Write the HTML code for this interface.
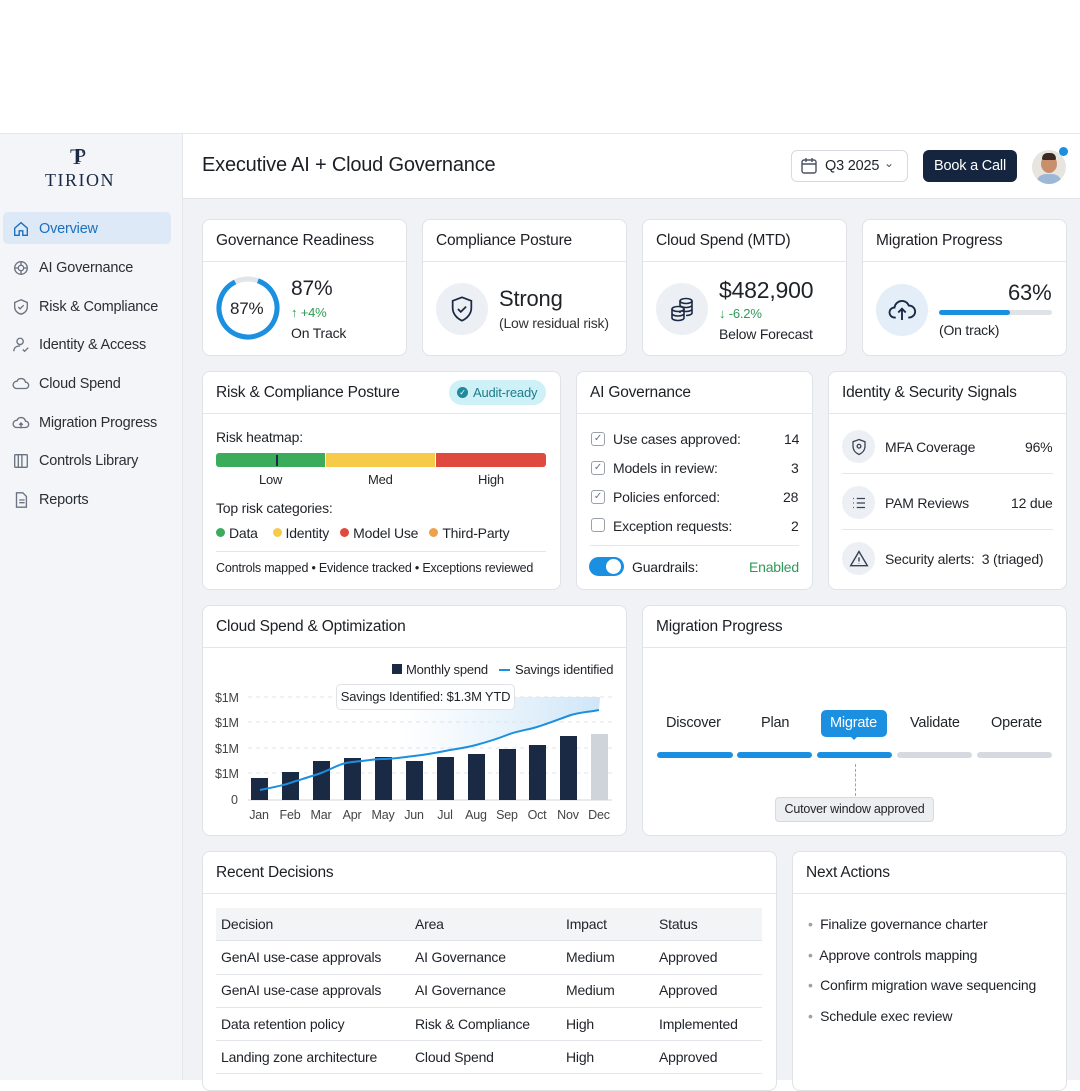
<!DOCTYPE html>
<html><head><meta charset="utf-8"><style>
*{box-sizing:border-box;margin:0;padding:0}
body{width:1080px;height:1080px;overflow:hidden;background:#fff;font-family:"Liberation Sans",sans-serif;color:#1f2328;position:relative;font-size:14px;letter-spacing:-0.2px}
.a{position:absolute}
.side{left:0;top:133px;width:183px;height:947px;background:#f3f5f8;border-right:1px solid #e3e6eb;border-top:1px solid #e6e8ec}
.main{left:183px;top:198px;width:897px;height:882px;background:#f0f2f5;border-top:1px solid #e2e5ea}
.hdr{left:183px;top:133px;width:897px;height:65px;background:#fff;border-top:1px solid #e6e8ec}
.card{position:absolute;background:#fff;border:1px solid #dfe2e7;border-radius:8px;overflow:hidden}
.ch{height:42px;border-bottom:1px solid #e3e6ea;padding:12px 13px;font-size:15.5px;color:#1c1f24}
.nav{position:absolute;left:12px;font-size:14.5px;color:#2a2e35;display:flex;align-items:center;gap:9px}
.nav svg{width:18px;height:18px;fill:none;stroke:#6b7280;stroke-width:1.5}
.t{position:absolute;white-space:nowrap}
.ic{position:absolute;width:52px;height:52px;border-radius:50%;background:#eceff4;display:flex;align-items:center;justify-content:center}
.cb{position:absolute;width:14px;height:14px;border:1.3px solid #9aa1ab;border-radius:3px}
.dot{display:inline-block;width:9px;height:9px;border-radius:50%;margin-right:4px;vertical-align:1px}
</style></head><body>
<div class="a side"></div>
<div class="a hdr"></div>
<div class="a main"></div>

<!-- logo -->
<div class="t" style="left:70px;top:144px;font-family:'Liberation Serif',serif;font-size:22px;color:#1b2a44">T</div>
<div class="t" style="left:75px;top:145px;font-family:'Liberation Serif',serif;font-size:20px;color:#1b2a44">P</div>
<div class="t" style="left:45px;top:170px;font-family:'Liberation Serif',serif;font-size:18px;letter-spacing:1.5px;color:#1b2a44">TIRION</div>

<div class="a" style="left:3px;top:212px;width:168px;height:32px;background:#dde9f6;border-radius:5px"></div>
<div class="nav" style="top:220px;color:#1a6fc0"><svg viewBox="0 0 20 20" style="stroke:#1a6fc0"><path d="M3 9l7-6 7 6v8h-5v-5H8v5H3z"/></svg>Overview</div>
<div class="nav" style="top:259px"><svg viewBox="0 0 20 20"><circle cx="10" cy="10" r="7"/><circle cx="10" cy="10" r="3"/><path d="M10 3v4M10 13v4M3 10h4M13 10h4"/></svg>AI Governance</div>
<div class="nav" style="top:298px"><svg viewBox="0 0 20 20"><path d="M10 2l7 3v5c0 4-3 7-7 8-4-1-7-4-7-8V5z"/><path d="M7 10l2 2 4-4"/></svg>Risk &amp; Compliance</div>
<div class="nav" style="top:336px"><svg viewBox="0 0 20 20"><circle cx="9" cy="6" r="3.5"/><path d="M2 17c0-4 3-6 7-6M12 15l2 2 4-4"/></svg>Identity &amp; Access</div>
<div class="nav" style="top:375px"><svg viewBox="0 0 20 20"><path d="M5 15h10a3.5 3.5 0 000-7 5 5 0 00-9.5-1A4 4 0 005 15z"/></svg>Cloud Spend</div>
<div class="nav" style="top:414px"><svg viewBox="0 0 20 20"><path d="M5 15h10a3.5 3.5 0 000-7 5 5 0 00-9.5-1A4 4 0 005 15zM10 16v-6M8 12l2-2 2 2"/></svg>Migration Progress</div>
<div class="nav" style="top:452px"><svg viewBox="0 0 20 20"><rect x="3" y="3" width="14" height="14" rx="1"/><path d="M7 3v14M11 3v14"/></svg>Controls Library</div>
<div class="nav" style="top:491px"><svg viewBox="0 0 20 20"><path d="M5 2h7l4 4v12H5zM8 10h6M8 13h6"/></svg>Reports</div>

<!-- header -->
<div class="t" style="left:202px;top:154px;font-size:20px;color:#1c1f24">Executive AI + Cloud Governance</div>
<div class="a" style="left:791px;top:150px;width:117px;height:32px;border:1px solid #d6dae0;border-radius:6px"></div>
<svg class="a" style="left:800px;top:157px" width="18" height="18" viewBox="0 0 18 18" fill="none" stroke="#4b5160" stroke-width="1.4"><rect x="2" y="3" width="14" height="13" rx="2"/><path d="M2 7h14M6 1v4M12 1v4"/></svg>
<div class="t" style="left:825px;top:158px;font-size:14.5px">Q3 2025</div>
<div class="t" style="left:884px;top:156px;font-size:12px;color:#555">⌄</div>
<div class="a" style="left:923px;top:150px;width:94px;height:32px;background:#15253f;border-radius:6px;color:#fff;font-size:14.5px;text-align:center;line-height:32px">Book a Call</div>
<div class="a" style="left:1032px;top:150px;width:34px;height:34px;border-radius:50%;background:#e8e4e0;overflow:hidden"><div class="a" style="left:9px;top:5px;width:16px;height:18px;border-radius:50%;background:#c98f6c"></div><div class="a" style="left:10px;top:3px;width:14px;height:7px;border-radius:6px 6px 2px 2px;background:#3a2a22"></div><div class="a" style="left:4px;top:24px;width:26px;height:14px;border-radius:10px 10px 0 0;background:#9cb8d6"></div></div>
<div class="a" style="left:1059px;top:147px;width:9px;height:9px;border-radius:50%;background:#1a8fe0"></div>

<!-- row 1 -->
<div class="card" style="left:202px;top:219px;width:205px;height:137px"><div class="ch">Governance Readiness</div></div>
<svg class="a" style="left:215px;top:275px" width="66" height="66" viewBox="0 0 66 66"><circle cx="33" cy="33" r="29" fill="none" stroke="#e1e5ea" stroke-width="5"/><circle cx="33" cy="33" r="29" fill="none" stroke="#1b8fe0" stroke-width="5" stroke-dasharray="158.5 182.2" transform="rotate(-70 33 33)"/></svg>
<div class="t" style="left:230px;top:299px;font-size:17px">87%</div>
<div class="t" style="left:291px;top:277px;font-size:21px">87%</div>
<div class="t" style="left:291px;top:305px;font-size:13px;color:#2f9a55">↑ +4%</div>
<div class="t" style="left:291px;top:325px;font-size:14px">On Track</div>

<div class="card" style="left:422px;top:219px;width:205px;height:137px"><div class="ch">Compliance Posture</div></div>
<div class="ic" style="left:436px;top:283px"><svg width="28" height="28" viewBox="0 0 24 24" fill="none" stroke="#1b2a44" stroke-width="1.5"><path d="M12 2l8 3v6c0 5-3.5 9-8 11-4.5-2-8-6-8-11V5z"/><path d="M8.5 12l2.5 2.5 4.5-4.5"/></svg></div>
<div class="t" style="left:499px;top:286px;font-size:22px">Strong</div>
<div class="t" style="left:499px;top:315px;font-size:14px;color:#333">(Low residual risk)</div>

<div class="card" style="left:642px;top:219px;width:205px;height:137px"><div class="ch">Cloud Spend (MTD)</div></div>
<div class="ic" style="left:656px;top:283px"><svg width="30" height="30" viewBox="0 0 30 30" fill="none" stroke="#1b2a44" stroke-width="1.6"><ellipse cx="19" cy="7" rx="6" ry="2.5"/><path d="M13 7v12M25 7v12M13 11c0 1.4 2.7 2.5 6 2.5s6-1.1 6-2.5M13 15c0 1.4 2.7 2.5 6 2.5s6-1.1 6-2.5M25 19c0 1.4-2.7 2.5-6 2.5"/><ellipse cx="11" cy="15" rx="6" ry="2.5" fill="#eceff4"/><path d="M5 15v9c0 1.4 2.7 2.5 6 2.5s6-1.1 6-2.5v-9M5 19.5c0 1.4 2.7 2.5 6 2.5s6-1.1 6-2.5"/></svg></div>
<div class="t" style="left:719px;top:277px;font-size:23px">$482,900</div>
<div class="t" style="left:719px;top:306px;font-size:13px;color:#2f9a55">↓ -6.2%</div>
<div class="t" style="left:719px;top:326px;font-size:14px">Below Forecast</div>

<div class="card" style="left:862px;top:219px;width:205px;height:137px"><div class="ch">Migration Progress</div></div>
<div class="ic" style="left:876px;top:284px;background:#e4eef8"><svg width="30" height="30" viewBox="0 0 24 24" fill="none" stroke="#1b2a44" stroke-width="1.5"><path d="M7 18H6a4 4 0 010-8 6 6 0 0111.5-1.5A4.5 4.5 0 0118 18h-1"/><path d="M12 20v-9M9 14l3-3 3 3"/></svg></div>
<div class="t" style="left:1008px;top:280px;font-size:22px">63%</div>
<div class="a" style="left:939px;top:310px;width:113px;height:5px;border-radius:3px;background:#dfe3e8"><div style="width:71px;height:5px;border-radius:3px;background:#1b8fe0"></div></div>
<div class="t" style="left:939px;top:322px;font-size:14px">(On track)</div>

<!-- row 2 -->
<div class="card" style="left:202px;top:371px;width:359px;height:219px"><div class="ch">Risk &amp; Compliance Posture</div></div>
<div class="a" style="left:449px;top:380px;width:97px;height:25px;border-radius:13px;background:#cdf1f7"></div>
<div class="a" style="left:457px;top:387px;width:11px;height:11px;border-radius:50%;background:#1e8a9c;color:#fff;font-size:8px;line-height:11px;text-align:center">✓</div>
<div class="t" style="left:473px;top:385px;font-size:13px;color:#1d7b8c">Audit-ready</div>
<div class="t" style="left:216px;top:429px;font-size:14px">Risk heatmap:</div>
<div class="a" style="left:216px;top:453px;width:109px;height:14px;background:#3aac5c;border-radius:3px 0 0 3px"></div>
<div class="a" style="left:276px;top:455px;width:2px;height:11px;background:#1b2a44"></div>
<div class="a" style="left:326px;top:453px;width:109px;height:14px;background:#f6cb4a"></div>
<div class="a" style="left:436px;top:453px;width:110px;height:14px;background:#e0493d;border-radius:0 3px 3px 0"></div>
<div class="t" style="left:259px;top:472px;font-size:13px">Low</div>
<div class="t" style="left:368px;top:472px;font-size:13px">Med</div>
<div class="t" style="left:478px;top:472px;font-size:13px">High</div>
<div class="t" style="left:216px;top:500px;font-size:14px">Top risk categories:</div>
<div class="t" style="left:216px;top:525px;font-size:14px"><span class="dot" style="background:#3aac5c"></span>Data &nbsp;&nbsp;&nbsp;<span class="dot" style="background:#f6cb4a"></span>Identity &nbsp;&nbsp;<span class="dot" style="background:#e0493d"></span>Model Use &nbsp;&nbsp;<span class="dot" style="background:#f0a04b"></span>Third-Party</div>
<div class="a" style="left:216px;top:551px;width:330px;height:1px;background:#e3e6ea"></div>
<div class="t" style="left:216px;top:561px;font-size:12.5px">Controls mapped • Evidence tracked • Exceptions reviewed</div>

<div class="card" style="left:576px;top:371px;width:237px;height:219px"><div class="ch">AI Governance</div></div>
<div class="cb" style="left:591px;top:432px;color:#6b7280;font-size:10px;line-height:11px;text-align:center">✓</div>
<div class="cb" style="left:591px;top:461px;color:#6b7280;font-size:10px;line-height:11px;text-align:center">✓</div>
<div class="cb" style="left:591px;top:490px;color:#6b7280;font-size:10px;line-height:11px;text-align:center">✓</div>
<div class="cb" style="left:591px;top:518px"></div>
<div class="t" style="left:613px;top:431px;font-size:14px">Use cases approved:</div><div class="t" style="left:784px;top:431px;font-size:14px">14</div>
<div class="t" style="left:613px;top:460px;font-size:14px">Models in review:</div><div class="t" style="left:791px;top:460px;font-size:14px">3</div>
<div class="t" style="left:613px;top:489px;font-size:14px">Policies enforced:</div><div class="t" style="left:783px;top:489px;font-size:14px">28</div>
<div class="t" style="left:613px;top:518px;font-size:14px">Exception requests:</div><div class="t" style="left:791px;top:518px;font-size:14px">2</div>
<div class="a" style="left:590px;top:545px;width:209px;height:1px;background:#e3e6ea"></div>
<div class="a" style="left:589px;top:557px;width:35px;height:19px;border-radius:10px;background:#1b8fe0"><div class="a" style="left:17px;top:2px;width:15px;height:15px;border-radius:50%;background:#fff"></div></div>
<div class="t" style="left:632px;top:559px;font-size:14px">Guardrails:</div>
<div class="t" style="left:749px;top:559px;font-size:14px;color:#2f9a55">Enabled</div>

<div class="card" style="left:828px;top:371px;width:239px;height:219px"><div class="ch">Identity &amp; Security Signals</div></div>
<div class="ic" style="left:842px;top:430px;width:33px;height:33px"><svg width="18" height="18" viewBox="0 0 24 24" fill="none" stroke="#374151" stroke-width="1.7"><path d="M12 2l8 3v6c0 5-3.5 9-8 11-4.5-2-8-6-8-11V5z"/><circle cx="12" cy="11" r="2.5"/></svg></div>
<div class="t" style="left:885px;top:439px;font-size:14px">MFA Coverage</div><div class="t" style="left:1025px;top:439px;font-size:14px">96%</div>
<div class="a" style="left:842px;top:473px;width:211px;height:1px;background:#e3e6ea"></div>
<div class="ic" style="left:842px;top:486px;width:33px;height:33px"><svg width="18" height="18" viewBox="0 0 24 24" fill="none" stroke="#374151" stroke-width="1.7"><path d="M9 6h11M9 12h11M9 18h11M4 6h1M4 12h1M4 18h1"/></svg></div>
<div class="t" style="left:885px;top:495px;font-size:14px">PAM Reviews</div><div class="t" style="left:1011px;top:495px;font-size:14px">12 due</div>
<div class="a" style="left:842px;top:529px;width:211px;height:1px;background:#e3e6ea"></div>
<div class="ic" style="left:842px;top:542px;width:33px;height:33px"><svg width="20" height="20" viewBox="0 0 24 24" fill="none" stroke="#374151" stroke-width="1.7"><path d="M12 3L2 20h20zM12 10v5M12 17.5v.5"/></svg></div>
<div class="t" style="left:885px;top:551px;font-size:14px">Security alerts:&nbsp; 3 (triaged)</div>

<!-- row 3 -->
<div class="card" style="left:202px;top:605px;width:425px;height:231px"><div class="ch">Cloud Spend &amp; Optimization</div></div>
<div class="a" style="left:392px;top:664px;width:10px;height:10px;background:#1b2a44"></div>
<div class="t" style="left:406px;top:662px;font-size:13px">Monthly spend</div>
<div class="a" style="left:499px;top:669px;width:11px;height:2px;background:#1b8fe0"></div>
<div class="t" style="left:515px;top:662px;font-size:13px">Savings identified</div>
<svg class="a" style="left:200px;top:680px" width="430" height="150" viewBox="200 680 430 150">
<defs><linearGradient id="g" x1="0" y1="0" x2="1" y2="0"><stop offset="0" stop-color="#d7ebfa" stop-opacity="0"/><stop offset="1" stop-color="#cfe6f8"/></linearGradient></defs>
<path d="M400 780 L414 756 445 751 476 745 507 735 537 727 568 716 599 710 L600 697 L400 697Z" fill="url(#g)"/>
<g stroke="#dfe3e8" stroke-dasharray="4 4"><line x1="248" y1="697" x2="612" y2="697"/><line x1="248" y1="722" x2="612" y2="722"/><line x1="248" y1="748" x2="612" y2="748"/><line x1="248" y1="773" x2="612" y2="773"/></g>
<line x1="248" y1="800" x2="612" y2="800" stroke="#d1d5db"/>
<g fill="#1b2a44"><rect x="251" y="778" width="17" height="22"/><rect x="282" y="772" width="17" height="28"/><rect x="313" y="761" width="17" height="39"/><rect x="344" y="758" width="17" height="42"/><rect x="375" y="757" width="17" height="43"/><rect x="406" y="761" width="17" height="39"/><rect x="437" y="757" width="17" height="43"/><rect x="468" y="754" width="17" height="46"/><rect x="499" y="749" width="17" height="51"/><rect x="529" y="745" width="17" height="55"/><rect x="560" y="736" width="17" height="64"/></g>
<rect x="591" y="734" width="17" height="66" fill="#cfd4db"/>
<path d="M260 790 C275 787 285 785 290 783 S310 777 321 773 S340 763 352 762 S375 759 383 759 S405 757 414 756 S435 753 445 751 S465 748 476 745 S497 739 507 735 S527 730 537 727 S557 720 568 716 S590 712 599 710" fill="none" stroke="#1b8fe0" stroke-width="2"/>
<g font-size="12.5" fill="#444" font-family="Liberation Sans"><text x="215" y="702">$1M</text><text x="215" y="727">$1M</text><text x="215" y="753">$1M</text><text x="215" y="778">$1M</text><text x="231" y="804">0</text>
<g text-anchor="middle"><text x="259" y="819">Jan</text><text x="290" y="819">Feb</text><text x="321" y="819">Mar</text><text x="352" y="819">Apr</text><text x="383" y="819">May</text><text x="414" y="819">Jun</text><text x="445" y="819">Jul</text><text x="476" y="819">Aug</text><text x="507" y="819">Sep</text><text x="537" y="819">Oct</text><text x="568" y="819">Nov</text><text x="599" y="819">Dec</text></g></g>
</svg>
<div class="a" style="left:336px;top:684px;width:179px;height:26px;background:#fff;border:1px solid #dfe2e7;border-radius:5px;font-size:13px;line-height:24px;text-align:center">Savings Identified: $1.3M YTD</div>

<div class="card" style="left:642px;top:605px;width:425px;height:231px"><div class="ch">Migration Progress</div></div>
<div class="a" style="left:821px;top:710px;width:66px;height:27px;background:#1b8fe0;border-radius:5px"></div>
<div class="a" style="left:849px;top:735px;width:0;height:0;border-left:5px solid transparent;border-right:5px solid transparent;border-top:5px solid #1b8fe0"></div>
<div class="t" style="left:666px;top:715px;font-size:14.5px">Discover</div>
<div class="t" style="left:761px;top:715px;font-size:14.5px">Plan</div>
<div class="t" style="left:830px;top:715px;font-size:14.5px;color:#fff">Migrate</div>
<div class="t" style="left:910px;top:715px;font-size:14.5px">Validate</div>
<div class="t" style="left:991px;top:715px;font-size:14.5px">Operate</div>
<div class="a" style="left:657px;top:752px;width:76px;height:6px;border-radius:3px;background:#1b8fe0"></div>
<div class="a" style="left:737px;top:752px;width:75px;height:6px;border-radius:3px;background:#1b8fe0"></div>
<div class="a" style="left:817px;top:752px;width:75px;height:6px;border-radius:3px;background:#1b8fe0"></div>
<div class="a" style="left:897px;top:752px;width:75px;height:6px;border-radius:3px;background:#d6dae0"></div>
<div class="a" style="left:977px;top:752px;width:75px;height:6px;border-radius:3px;background:#d6dae0"></div>
<div class="a" style="left:855px;top:764px;width:0;height:32px;border-left:1px dashed #a0a6ae"></div>
<div class="a" style="left:775px;top:797px;width:159px;height:25px;background:#eceef1;border:1px solid #d6dae0;border-radius:4px;font-size:12.5px;line-height:23px;text-align:center">Cutover window approved</div>

<!-- row 4 -->
<div class="card" style="left:202px;top:851px;width:575px;height:240px"><div class="ch">Recent Decisions</div></div>
<div class="a" style="left:216px;top:908px;width:546px;height:33px;background:#f3f4f6;border-bottom:1px solid #e0e3e7"></div>
<div class="a" style="left:216px;top:974px;width:546px;height:1px;background:#e3e6ea"></div>
<div class="a" style="left:216px;top:1007px;width:546px;height:1px;background:#e3e6ea"></div>
<div class="a" style="left:216px;top:1040px;width:546px;height:1px;background:#e3e6ea"></div>
<div class="a" style="left:216px;top:1073px;width:546px;height:1px;background:#e3e6ea"></div>
<div class="t" style="left:221px;top:916px;font-size:14px;line-height:16.6px">Decision<br><br>GenAI use-case approvals<br><br>GenAI use-case approvals<br><br>Data retention policy<br><br>Landing zone architecture</div>
<div class="t" style="left:415px;top:916px;font-size:14px;line-height:16.6px">Area<br><br>AI Governance<br><br>AI Governance<br><br>Risk &amp; Compliance<br><br>Cloud Spend</div>
<div class="t" style="left:566px;top:916px;font-size:14px;line-height:16.6px">Impact<br><br>Medium<br><br>Medium<br><br>High<br><br>High</div>
<div class="t" style="left:659px;top:916px;font-size:14px;line-height:16.6px">Status<br><br>Approved<br><br>Approved<br><br>Implemented<br><br>Approved</div>

<div class="card" style="left:792px;top:851px;width:275px;height:240px"><div class="ch">Next Actions</div></div>
<div class="t" style="left:808px;top:909px;font-size:14px;line-height:30.5px"><span style="color:#9aa1ab">•</span>&nbsp; Finalize governance charter<br><span style="color:#9aa1ab">•</span>&nbsp; Approve controls mapping<br><span style="color:#9aa1ab">•</span>&nbsp; Confirm migration wave sequencing<br><span style="color:#9aa1ab">•</span>&nbsp; Schedule exec review</div>
</body></html>
